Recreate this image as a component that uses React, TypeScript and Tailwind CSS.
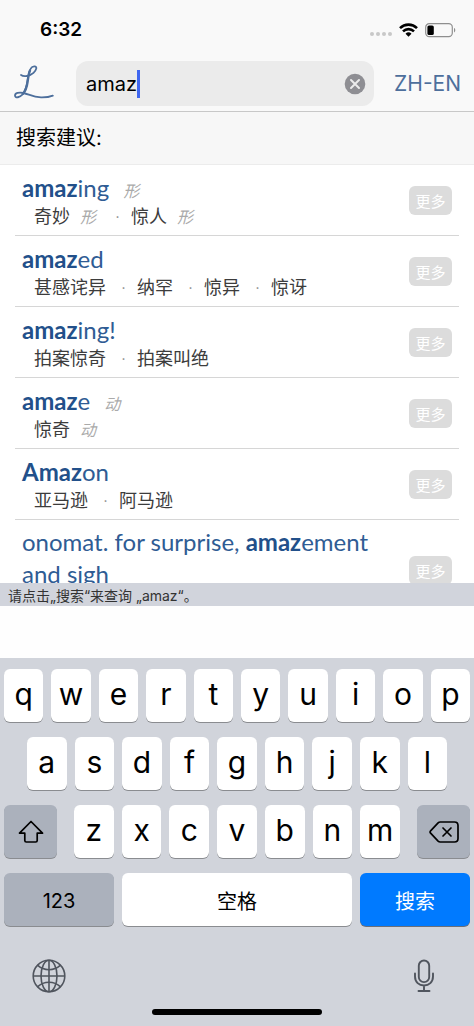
import { Fragment, useState } from "react";

type Word = { text: string; pos?: string };

type Suggestion = {
  before?: string;
  match: string;
  after: string;
  pos?: string;
  words: Word[];
};

const SUGGESTIONS: Suggestion[] = [
  {
    match: "amaz",
    after: "ing",
    pos: "形",
    words: [
      { text: "奇妙", pos: "形" },
      { text: "惊人", pos: "形" },
    ],
  },
  {
    match: "amaz",
    after: "ed",
    words: [{ text: "甚感诧异" }, { text: "纳罕" }, { text: "惊异" }, { text: "惊讶" }],
  },
  { match: "amaz", after: "ing!", words: [{ text: "拍案惊奇" }, { text: "拍案叫绝" }] },
  { match: "amaz", after: "e", pos: "动", words: [{ text: "惊奇", pos: "动" }] },
  { match: "Amaz", after: "on", words: [{ text: "亚马逊" }, { text: "阿马逊" }] },
  {
    before: "onomat. for surprise, ",
    match: "amaz",
    after: "ement and sigh",
    words: [],
  },
];

function StatusBar() {
  return (
    <div className="flex h-14 items-center justify-between pl-10 pr-[18px] pt-1">
      <div className="text-[19px] font-semibold text-black">6:32</div>
      <div className="flex items-center gap-[7px]">
        <div className="flex gap-0.5 pt-2">
          <span className="size-1 rounded-full bg-[#c8c8c8]" />
          <span className="size-1 rounded-full bg-[#c8c8c8]" />
          <span className="size-1 rounded-full bg-[#c8c8c8]" />
          <span className="size-1 rounded-full bg-[#c8c8c8]" />
        </div>
        <svg width="19" height="14" viewBox="0 0 19 14" fill="none" stroke="#000" strokeWidth="2.6">
          <path d="M1 5.1a12.2 12.2 0 0 1 17 0" />
          <path d="M4 8.4a7.9 7.9 0 0 1 11 0" />
          <path d="M9.5 13.8l-3-3.1a4.3 4.3 0 0 1 6 0z" fill="#000" stroke="none" />
        </svg>
        <svg width="31" height="15" viewBox="0 0 31 15">
          <rect x="0.7" y="0.7" width="26.6" height="13" rx="3.6" fill="none" stroke="#8f8f8f" strokeWidth="1.2" />
          <rect x="2.4" y="2.4" width="6.4" height="9.6" rx="1.6" fill="#000" />
          <path d="M29 5c1.7.6 1.7 3.8 0 4.4z" fill="#8f8f8f" />
        </svg>
      </div>
    </div>
  );
}

function Logo() {
  return (
    <svg width="40" height="38" viewBox="0 0 40 38" fill="none" stroke="#4d6f9c" strokeLinecap="round" strokeLinejoin="round">
      <path
        d="M7 10C10 12 16 11 19.5 7.8C22.5 5 23.5 1.6 20.5 1.3C16.500 1 14.800 7 14 12C13 19 12.500 25 8.500 29.500C6 32.300 1.200 33.600 1 30.800C.9 28 5 27 9.500 28C15 29.300 19 32.200 27 32.400C32 32.500 36 31.800 38.800 30.600"
        strokeWidth="1.800"
      />
      <path d="M16 5.500C14.600 9 14.200 13 13.600 17C12.900 22 11.500 26 8.800 29" strokeWidth="2.300" />
    </svg>
  );
}

function SearchRow() {
  const [query, setQuery] = useState("amaz");

  return (
    <div className="flex h-[55px] items-center pl-3.5 pr-[13px]">
      <Logo />
      <div className="ml-[22px] flex h-[45px] flex-1 items-center rounded-xl bg-[#ebebeb] pl-2.5 pr-2">
        <input
          type="text"
          aria-label="搜索"
          value={query}
          onChange={(e) => setQuery(e.target.value)}
          className="bg-transparent text-xl text-black caret-transparent outline-none [field-sizing:content]"
        />
        <span className="h-7 w-[3px] bg-[#3f66f0]" />
        <button aria-label="清除" className="ml-auto" onClick={() => setQuery("")}>
          <svg width="22" height="22" viewBox="0 0 22 22">
            <circle cx="11" cy="11" r="10.300" fill="#8e8e93" />
            <path d="M7 7l8 8M15 7l-8 8" stroke="#ebebeb" strokeWidth="2" strokeLinecap="round" />
          </svg>
        </button>
      </div>
      <button className="ml-5 text-[21px] text-[#4d6f9c]">ZH-EN</button>
    </div>
  );
}

function Pos({ children }: { children: string }) {
  return <i className="text-base text-[#aaa]">{children}</i>;
}

function SuggestionRow({ item }: { item: Suggestion }) {
  return (
    <li className="mx-[15px] flex min-h-[71px] items-center border-b border-[#d6d6d6] px-[7px]">
      <div className="flex-1 pt-1.5">
        <div className="max-w-[360px] font-[Lato,'Noto_Sans_CJK_SC',sans-serif] text-2xl leading-8 text-[#2f5c94]">
          {item.before}
          <b className="font-bold text-[#22508a]">{item.match}</b>
          {item.after}
          {item.pos && (
            <span className="ml-3.5">
              <Pos>{item.pos}</Pos>
            </span>
          )}
        </div>
        <div className="flex min-h-[30px] items-center pb-1 pl-3 text-lg leading-[26px] text-[#3c3c3c]">
          {item.words.map((word, i) => (
            <Fragment key={word.text}>
              {i > 0 && <span className="w-[31px] pl-1 text-center text-sm text-[#888]">·</span>}
              <span>{word.text}</span>
              {word.pos && (
                <span className="ml-2.5 mr-1">
                  <Pos>{word.pos}</Pos>
                </span>
              )}
            </Fragment>
          ))}
        </div>
      </div>
      <button className="h-[29px] w-[43px] rounded-md bg-[#dcdcdc] pt-1 text-[15px] leading-6 text-white">更多</button>
    </li>
  );
}

function Key({ label }: { label: string }) {
  return (
    <button className="flex-1 rounded-md bg-white pb-0.5 text-[30px] text-black shadow-[0_1px_0_#8a8c90]">
      {label}
    </button>
  );
}

function Keys({ letters }: { letters: string }) {
  return letters.split("").map((letter) => <Key key={letter} label={letter} />);
}

function Keyboard() {
  return (
    <div className="bg-[#d1d4db] px-1 pt-[11px]">
      <div className="flex flex-col gap-[15px]">
        <div className="flex h-[53px] gap-2">
          <Keys letters="qwertyuiop" />
        </div>
        <div className="flex h-[53px] gap-2 px-[23px]">
          <Keys letters="asdfghjkl" />
        </div>
        <div className="flex h-[53px] gap-[17px]">
          <button
            aria-label="Shift"
            className="flex w-[53px] items-center justify-center rounded-md bg-[#abb1bc] shadow-[0_1px_0_#8a8c90]"
          >
            <svg width="26" height="24" viewBox="0 0 26 24" fill="none" stroke="#000" strokeWidth="1.700" strokeLinejoin="round">
              <path d="M13 1.500L1.500 13.200h5.300v7.300c0 1 .5 1.500 1.500 1.500h9.400c1 0 1.500-.5 1.500-1.500v-7.300h5.300z" />
            </svg>
          </button>
          <div className="flex flex-1 gap-2">
            <Keys letters="zxcvbnm" />
          </div>
          <button
            aria-label="Delete"
            className="flex w-[53px] items-center justify-center rounded-md bg-[#abb1bc] shadow-[0_1px_0_#8a8c90]"
          >
            <svg width="30" height="22" viewBox="0 0 30 22" fill="none" stroke="#000" strokeWidth="1.700" strokeLinecap="round" strokeLinejoin="round">
              <path d="M11.200 1h14.300c2 0 3.500 1.500 3.500 3.500v13c0 2-1.500 3.500-3.500 3.500H11.200c-.9 0-1.500-.3-2.100-.9L1.600 12.200c-.7-.8-.7-1.600 0-2.400L9.100 1.900c.6-.6 1.200-.9 2.100-.9z" />
              <path d="M14 7l8 8M22 7l-8 8" />
            </svg>
          </button>
        </div>
        <div className="flex h-[53px] gap-2 text-xl">
          <button className="w-[110px] rounded-md bg-[#abb1bc] pt-0.5 text-black shadow-[0_1px_0_#8a8c90]">123</button>
          <button className="flex-1 rounded-md bg-white pt-1 text-black shadow-[0_1px_0_#8a8c90]">空格</button>
          <button className="w-[110px] rounded-md bg-[#007aff] pt-1 text-white shadow-[0_1px_0_#6b6f78]">搜索</button>
        </div>
      </div>
      <div className="flex items-center justify-between px-7 pt-[33px]">
        <button aria-label="切换键盘">
          <svg width="34" height="34" viewBox="0 0 34 34" fill="none" stroke="#50555e" strokeWidth="1.600">
            <circle cx="17" cy="17" r="15.800" />
            <ellipse cx="17" cy="17" rx="8" ry="15.800" />
            <path d="M17 1.200v31.600M1.200 17h31.600" />
            <path d="M5.500 6.200c6.500 6 16.500 6 23 0M5.500 27.800c6.500-6 16.500-6 23 0" />
          </svg>
        </button>
        <button aria-label="听写" className="mr-2">
          <svg width="20" height="34" viewBox="0 0 20 34" fill="none" stroke="#50555e" strokeWidth="1.900" strokeLinecap="round">
            <rect x="4.800" y="1.500" width="10.400" height="21.600" rx="5.200" />
            <path d="M1 14.500v3c0 5.600 4 9 9 9s9-3.400 9-9v-3M10 26.500v5.300M4.500 32h11" />
          </svg>
        </button>
      </div>
      <div className="flex justify-center pb-[11px] pt-4">
        <div className="h-1.5 w-[170px] rounded-full bg-black" />
      </div>
    </div>
  );
}

export default function App() {
  return (
    <div className="flex h-screen flex-col bg-white font-[Inter,'Noto_Sans_CJK_SC',sans-serif]">
      <header className="border-b border-[#c8c8c8] bg-[#f9f9f9]">
        <StatusBar />
        <SearchRow />
      </header>
      <h1 className="border-b border-[#ececec] bg-[#f7f7f7] px-4 py-3 text-xl leading-7 text-black">搜索建议:</h1>
      <ul className="min-h-0 flex-1 overflow-hidden">
        {SUGGESTIONS.map((item) => (
          <SuggestionRow key={item.after} item={item} />
        ))}
      </ul>
      <p className="bg-[#d1d4dc] px-2 pt-0.5 text-sm leading-[21px] text-[#333]">请点击„搜索“来查询 „amaz“。</p>
      <div className="h-[52px] bg-[#fefefe]" />
      <Keyboard />
    </div>
  );
}
